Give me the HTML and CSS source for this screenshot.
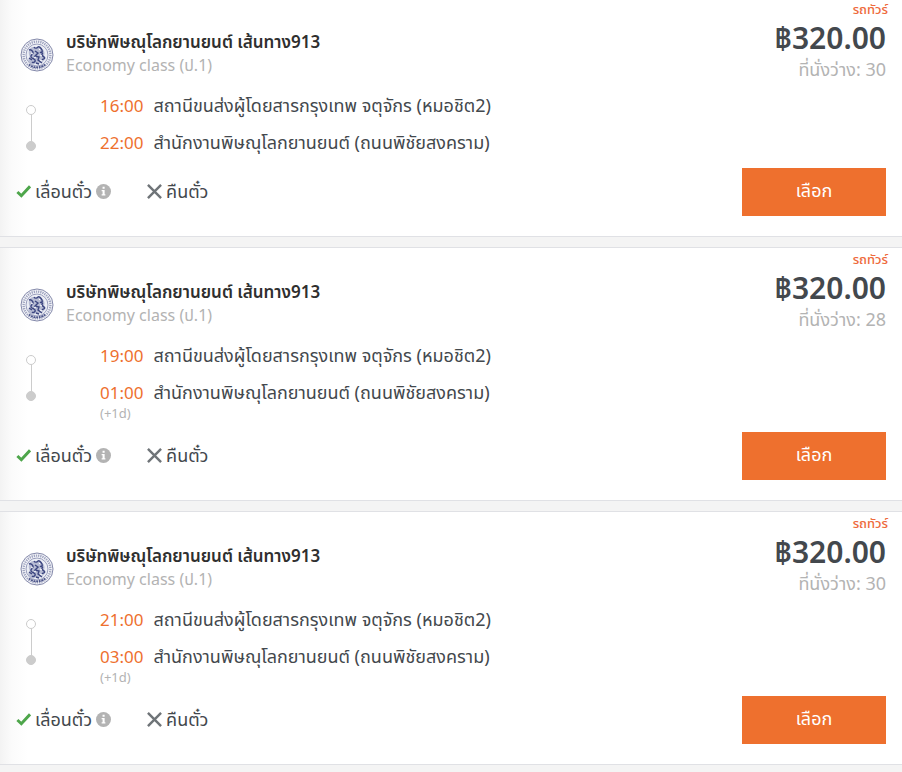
FILE: index.html
```html
<!DOCTYPE html>
<html lang="th">
<head>
    <meta charset="UTF-8">
    <meta name="viewport" content="width=device-width, initial-scale=1.0">
    <title>รถทัวร์</title>
    <link rel="stylesheet" href="styles.css">
</head>
<body>
    <svg class="sprite" aria-hidden="true">
        <symbol id="logo" viewBox="0 0 34 34">
            <circle cx="17" cy="17" r="16" fill="#f4f5f9" stroke="#8489aa" stroke-width="1"/>
            <circle cx="17" cy="17" r="13.4" fill="none" stroke="#a0a5c0" stroke-width="2.4" stroke-dasharray="1.3 .9"/>
            <path d="M9 26.500a12.800 12.800 0 0 0 16 0" fill="none" stroke="#4c558a" stroke-width="2" stroke-dasharray="1.8 .8"/>
            <circle cx="17" cy="17" r="11" fill="#eceef5" stroke="#8188ac" stroke-width=".8"/>
            <path d="M9.500 11c2-2 4-3 5-1s3-2 5-1 5 3 5 6-1 3 0 5-2 4-4 5-4-1-6 1-5-1-6-3 2-3 1-5-1-5 0-7z" fill="#b7bcd3"/>
            <path d="M9 12c2-1 3 0 4 2s-3 3-2 5 3 1 4 3-2 3-3 2M14 9c1 2 3 1 4 0s3 1 4 3-1 3-2 2M15 13l3 2-3 3 4 1-1 3 4 3M23 15c-2 1-1 3 1 4s-1 3-2 2M9 20l3 2M16 25l3 1" fill="none" stroke="#3c4680" stroke-width="1.400"/>
            <path d="M11 15l2 1M20 17l2 1M14 20l2-1M19 11l1 1M20 22l2 1" stroke="#fff" stroke-width="1"/>
        </symbol>
        <symbol id="check" viewBox="0 0 16 14">
            <path d="M1.500 7.500l4.200 4L15 1.500" fill="none" stroke="#4ea64b" stroke-width="3.200"/>
        </symbol>
        <symbol id="cross" viewBox="0 0 16 16">
            <path d="M1 1l14 14M15 1L1 15" fill="none" stroke="#6f7478" stroke-width="2.600"/>
        </symbol>
        <symbol id="info" viewBox="0 0 16 16">
            <circle cx="8" cy="8" r="8" fill="#b3b3b3"/>
            <path d="M7 3h2.200v2H7zM6 6.500h3.200V11H10v1.300H6V11h1V7.800H6z" fill="#fff"/>
        </symbol>
    </svg>

    <main class="trips">
        <article class="trip">
            <p class="trip-type">รถทัวร์</p>
            <header class="trip-header">
                <svg class="logo"><use href="#logo"/></svg>
                <div class="operator">
                    <h2 class="operator-name">บริษัทพิษณุโลกยานยนต์ เส้นทาง913</h2>
                    <p class="operator-class">Economy class (ป.1)</p>
                </div>
                <div class="fare">
                    <p class="price">฿320.00</p>
                    <p class="seats">ที่นั่งว่าง: 30</p>
                </div>
            </header>
            <div class="route">
                <div class="line"><span class="dot"></span><span class="dot dot-end"></span></div>
                <div class="stops">
                    <div class="stop"><time class="time">16:00</time><span>สถานีขนส่งผู้โดยสารกรุงเทพ จตุจักร (หมอชิต2)</span></div>
                    <div class="stop"><time class="time">22:00</time><span>สำนักงานพิษณุโลกยานยนต์ (ถนนพิชัยสงคราม)</span></div>
                </div>
            </div>
            <footer class="trip-footer">
                <div class="policies">
                    <span class="policy"><svg class="icon"><use href="#check"/></svg>เลื่อนตั๋ว<svg class="icon"><use href="#info"/></svg></span>
                    <span class="policy"><svg class="icon"><use href="#cross"/></svg>คืนตั๋ว</span>
                </div>
                <button type="button" class="select">เลือก</button>
            </footer>
        </article>

        <article class="trip">
            <p class="trip-type">รถทัวร์</p>
            <header class="trip-header">
                <svg class="logo"><use href="#logo"/></svg>
                <div class="operator">
                    <h2 class="operator-name">บริษัทพิษณุโลกยานยนต์ เส้นทาง913</h2>
                    <p class="operator-class">Economy class (ป.1)</p>
                </div>
                <div class="fare">
                    <p class="price">฿320.00</p>
                    <p class="seats">ที่นั่งว่าง: 28</p>
                </div>
            </header>
            <div class="route">
                <div class="line"><span class="dot"></span><span class="dot dot-end"></span></div>
                <div class="stops">
                    <div class="stop"><time class="time">19:00</time><span>สถานีขนส่งผู้โดยสารกรุงเทพ จตุจักร (หมอชิต2)</span></div>
                    <div class="stop"><time class="time">01:00</time><span>สำนักงานพิษณุโลกยานยนต์ (ถนนพิชัยสงคราม)</span></div>
                    <p class="next-day">(+1d)</p>
                </div>
            </div>
            <footer class="trip-footer">
                <div class="policies">
                    <span class="policy"><svg class="icon"><use href="#check"/></svg>เลื่อนตั๋ว<svg class="icon"><use href="#info"/></svg></span>
                    <span class="policy"><svg class="icon"><use href="#cross"/></svg>คืนตั๋ว</span>
                </div>
                <button type="button" class="select">เลือก</button>
            </footer>
        </article>

        <article class="trip">
            <p class="trip-type">รถทัวร์</p>
            <header class="trip-header">
                <svg class="logo"><use href="#logo"/></svg>
                <div class="operator">
                    <h2 class="operator-name">บริษัทพิษณุโลกยานยนต์ เส้นทาง913</h2>
                    <p class="operator-class">Economy class (ป.1)</p>
                </div>
                <div class="fare">
                    <p class="price">฿320.00</p>
                    <p class="seats">ที่นั่งว่าง: 30</p>
                </div>
            </header>
            <div class="route">
                <div class="line"><span class="dot"></span><span class="dot dot-end"></span></div>
                <div class="stops">
                    <div class="stop"><time class="time">21:00</time><span>สถานีขนส่งผู้โดยสารกรุงเทพ จตุจักร (หมอชิต2)</span></div>
                    <div class="stop"><time class="time">03:00</time><span>สำนักงานพิษณุโลกยานยนต์ (ถนนพิชัยสงคราม)</span></div>
                    <p class="next-day">(+1d)</p>
                </div>
            </div>
            <footer class="trip-footer">
                <div class="policies">
                    <span class="policy"><svg class="icon"><use href="#check"/></svg>เลื่อนตั๋ว<svg class="icon"><use href="#info"/></svg></span>
                    <span class="policy"><svg class="icon"><use href="#cross"/></svg>คืนตั๋ว</span>
                </div>
                <button type="button" class="select">เลือก</button>
            </footer>
        </article>
    </main>
</body>
</html>
```

FILE: styles.css
```css
* {
    margin: 0;
    padding: 0;
    box-sizing: border-box;
}

body {
    background: #f4f4f4;
    color: #43484d;
    font-family: "Noto Sans", "Noto Sans Thai", sans-serif;
    font-size: 18px;
    line-height: 22px;
}

.sprite {
    display: none;
}

.trips {
    display: flex;
    flex-direction: column;
    gap: 10px;
    margin-top: -3px;
}

.trip {
    /* soft shade along the left edge */
    background: linear-gradient(to right, #f3f3f3, #fbfbfb 12px, #fff 28px);
    border-top: 1px solid #e0e1e5;
    border-bottom: 1px solid #e0e1e5;
    padding: 3px 16px 20px;
}

.trip-type {
    color: #ee6a3c;
    font-size: 13px;
    font-weight: 500;
    line-height: 16px;
    text-align: right;
    margin-right: -2px;
}

.trip-header {
    display: flex;
    align-items: flex-start;
}

.logo {
    width: 34px;
    height: 34px;
    margin: 21px 12px 0 4px;
}

.operator {
    flex: 1;
    padding-top: 13px;
}

.operator-name {
    color: #2f2f2f;
    font-size: 17px;
    font-weight: 600;
    line-height: 24px;
}

.operator-class,
.seats,
.next-day {
    color: #b3b3b3;
}

.operator-class {
    font-size: 16px;
}

.fare {
    padding-top: 1px;
    text-align: right;
}

.price {
    font-size: 30px;
    font-weight: 600;
    line-height: 40px;
}

.route {
    display: flex;
    align-items: flex-start;
    padding-top: 14px;
}

.line {
    display: flex;
    flex-direction: column;
    justify-content: space-between;
    width: 10px;
    height: 46px;
    margin: 11px 64px 0 10px;
    background: linear-gradient(#ccc, #ccc) center / 1px 100% no-repeat;
}

.dot {
    width: 10px;
    height: 10px;
    border: 1px solid #ccc;
    border-radius: 50%;
    background: #fff;
}

.dot-end {
    background: #ccc;
}

.stop {
    display: flex;
    align-items: baseline;
    gap: 10px;
    padding-bottom: 14px;
}

.time {
    color: #ee702e;
    font-size: 17px;
}

.next-day {
    font-size: 13px;
    line-height: 14px;
    margin-top: -12px;
    padding-bottom: 12px;
}

.trip-footer {
    display: flex;
    align-items: center;
    justify-content: space-between;
}

.policies,
.policy {
    display: flex;
    align-items: center;
}

.policies {
    gap: 36px;
    padding-bottom: 2px;
}

.policy {
    gap: 4px;
}

.icon {
    width: 15px;
    height: 15px;
}

.select {
    width: 144px;
    height: 48px;
    padding-bottom: 2px;
    border: 0;
    background: #ee702e;
    color: #fff;
    font-family: inherit;
    font-size: 18px;
    cursor: pointer;
}
```
